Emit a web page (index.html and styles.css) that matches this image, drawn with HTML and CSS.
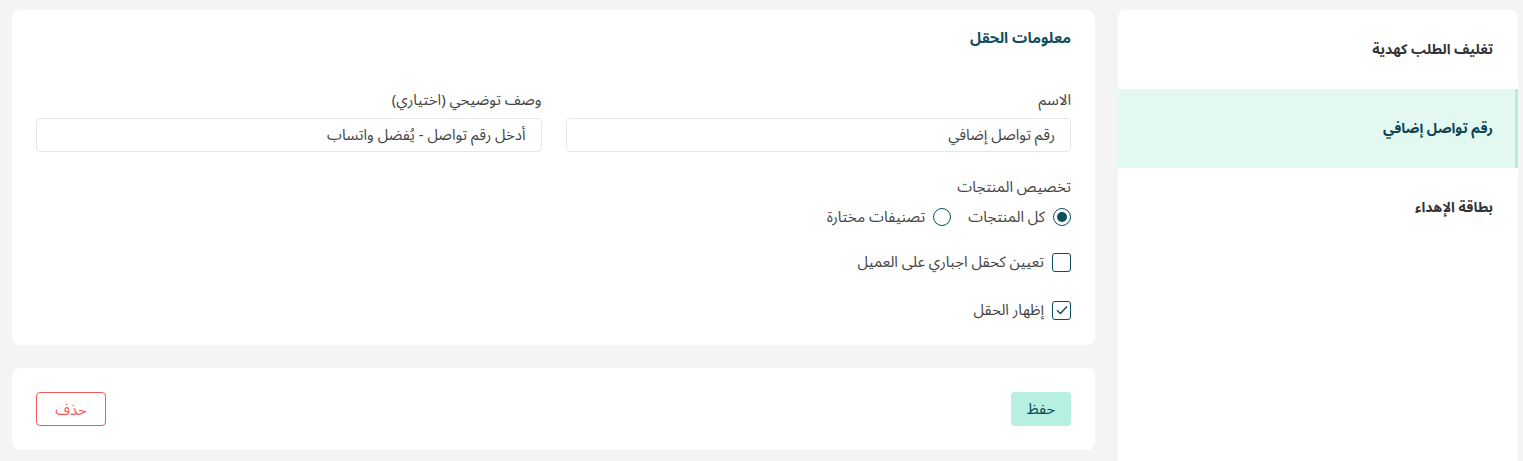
FILE: index.html
```html
<!DOCTYPE html>
<html lang="ar" dir="rtl">
<head>
    <meta charset="UTF-8">
    <meta name="viewport" content="width=device-width, initial-scale=1.0">
    <title>معلومات الحقل</title>
    <link rel="stylesheet" href="styles.css">
</head>
<body>
    <div class="page">
        <aside class="sidebar">
            <a class="side-item">تغليف الطلب كهدية</a>
            <a class="side-item active">رقم تواصل إضافي</a>
            <a class="side-item">بطاقة الإهداء</a>
        </aside>

        <main class="content">
            <section class="card">
                <h2 class="card-title">معلومات الحقل</h2>

                <div class="form-row">
                    <div class="form-group">
                        <label for="fieldName">الاسم</label>
                        <input type="text" id="fieldName" value="رقم تواصل إضافي">
                    </div>
                    <div class="form-group">
                        <label for="fieldDesc">وصف توضيحي (اختياري)</label>
                        <input type="text" id="fieldDesc" value="أدخل رقم تواصل - يُفضل واتساب">
                    </div>
                </div>

                <div class="group-label">تخصيص المنتجات</div>
                <div class="radio-row">
                    <label class="radio">
                        <span class="radio-dot checked"></span>
                        كل المنتجات
                    </label>
                    <label class="radio">
                        <span class="radio-dot"></span>
                        تصنيفات مختارة
                    </label>
                </div>

                <label class="check check-first">
                    <span class="check-box"></span>
                    تعيين كحقل اجباري على العميل
                </label>
                <label class="check">
                    <span class="check-box">
                        <svg width="12" height="10" viewBox="0 0 12 10"><path d="M1 5.2 L4.4 8.4 L11 1.4" fill="none" stroke="#0b4f5c" stroke-width="1.4"/></svg>
                    </span>
                    إظهار الحقل
                </label>
            </section>

            <section class="card actions">
                <button class="btn btn-save" type="button">حفظ</button>
                <button class="btn btn-delete" type="button">حذف</button>
            </section>
        </main>
    </div>
</body>
</html>
```

FILE: styles.css
```css
body {
    margin: 0;
    padding: 0;
    background: #f4f4f4;
    font-family: "Noto Sans Arabic", "DejaVu Sans", "Noto Sans", sans-serif;
    color: #3d3d3d;
    font-size: 15px;
}

.page {
    display: flex;
    gap: 23px;
    padding: 10px 5px 0 12px;
    align-items: flex-start;
}

.sidebar {
    width: 400px;
    flex-shrink: 0;
    background: white;
    border-radius: 8px 8px 0 0;
    min-height: 470px;
}

.side-item {
    display: flex;
    align-items: center;
    height: 79px;
    padding-right: 22px;
    font-size: 14px;
    font-weight: bold;
    color: #333;
    border-right: 3px solid transparent;
}

.side-item.active {
    background: #e4f8f2;
    border-right-color: #b5eedd;
    color: #0b4653;
}

.content {
    flex: 1;
    display: flex;
    flex-direction: column;
    gap: 23px;
}

.card {
    background: white;
    border-radius: 8px;
    padding: 18px 24px 25px;
}

.card-title {
    margin: 0 0 42px;
    font-size: 15px;
    line-height: 20px;
    font-weight: bold;
    color: #11505e;
}

.form-row {
    display: flex;
    gap: 24px;
}

.form-group {
    flex: 1;
}

.form-group label {
    display: block;
    line-height: 20px;
    margin-bottom: 8px;
    color: #444;
}

.form-group input {
    width: 100%;
    height: 34px;
    box-sizing: border-box;
    border: 1px solid #e6e6e6;
    border-radius: 4px;
    padding: 0 15px;
    font-family: inherit;
    font-size: 15px;
    color: #444;
    background: white;
}

.group-label {
    margin-top: 25px;
    line-height: 20px;
    color: #444;
}

.radio-row {
    display: flex;
    gap: 17px;
    margin-top: 10px;
}

.radio, .check {
    display: flex;
    align-items: center;
    gap: 8px;
    line-height: 20px;
    color: #444;
}

.radio-dot {
    width: 18px;
    height: 18px;
    box-sizing: border-box;
    border: 1.5px solid #0b4f5c;
    border-radius: 50%;
    display: flex;
    align-items: center;
    justify-content: center;
}

.radio-dot.checked::after {
    content: "";
    width: 10px;
    height: 10px;
    border-radius: 50%;
    background: #0b4f5c;
}

.check {
    margin-top: 28px;
}

.check-first {
    margin-top: 25px;
}

.check-box {
    width: 19px;
    height: 19px;
    box-sizing: border-box;
    border: 1.5px solid #0b4f5c;
    border-radius: 3px;
    display: flex;
    align-items: center;
    justify-content: center;
}

.actions {
    display: flex;
    justify-content: space-between;
    padding: 24px;
}

.btn {
    height: 34px;
    border-radius: 4px;
    font-family: inherit;
    font-size: 15px;
    cursor: pointer;
}

.btn-save {
    width: 60px;
    border: none;
    background: #b7f0e1;
    color: #0b4653;
}

.btn-delete {
    width: 70px;
    border: 1px solid #f15a5a;
    background: white;
    color: #f15a5a;
}
```
